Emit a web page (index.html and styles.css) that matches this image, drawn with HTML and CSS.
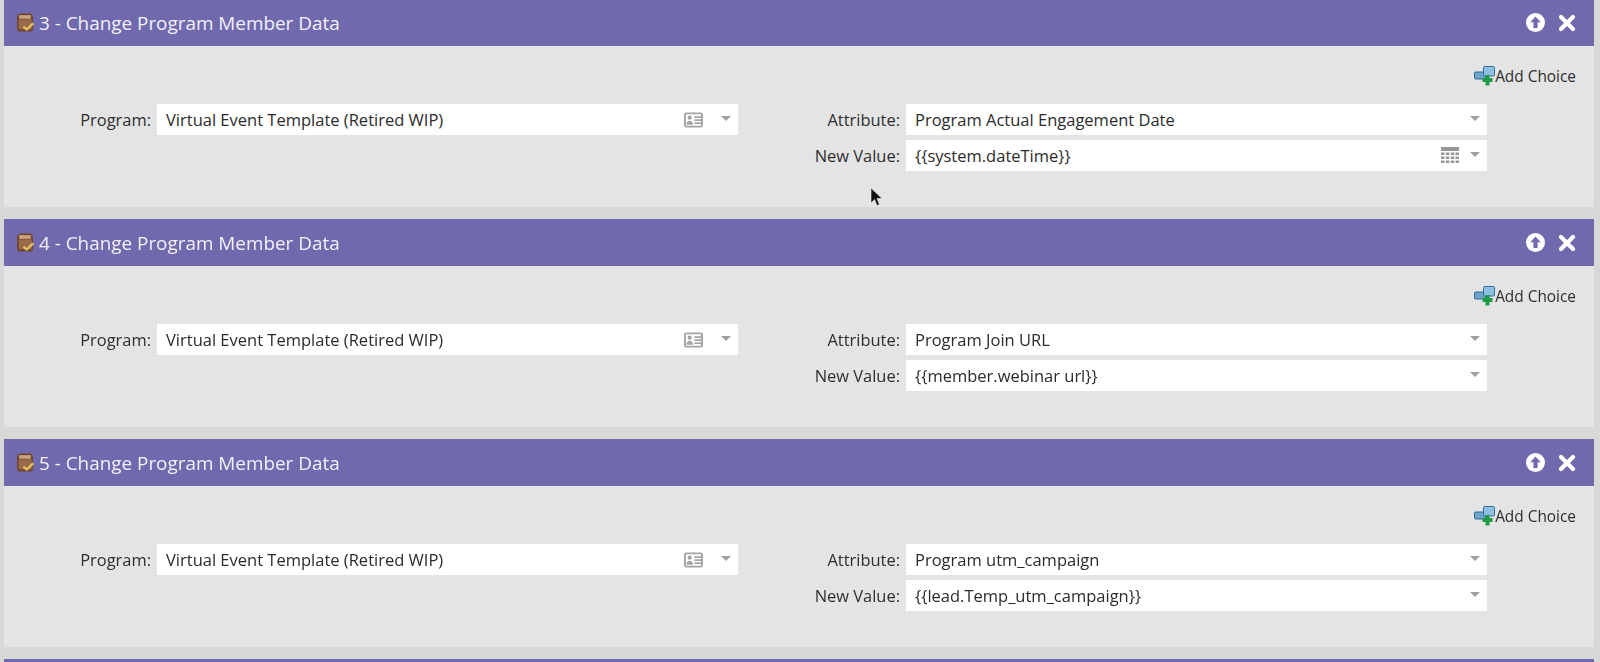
FILE: index.html
```html
<!DOCTYPE html>
<html lang="en">
<head>
<meta charset="utf-8">
<title>Flow steps</title>
<link rel="stylesheet" href="styles.css">
</head>
<body>
<svg class="defs" width="0" height="0" aria-hidden="true">
  <defs>
    <symbol id="i-box" viewBox="0 0 18 18">
      <path d="M1 3 3.500 .5h10.500l2 2.500v13l-1.500 1.500h-12L1 16z" fill="#6e452b"/>
      <path d="M3 2h11v3.500H3z" fill="#c9a27f"/>
      <path d="M2.500 6h12.500v9.500H2.500z" fill="#99694a"/>
      <path d="M8 12l2.200 2.200 5-5.200 2 1.500-7 6.500-4-3.300z" fill="#e0c25c"/>
    </symbol>
    <symbol id="i-up" viewBox="0 0 20 20">
      <circle cx="10" cy="10" r="10" fill="#fff"/>
      <path d="M10 3.800 15.500 9.800h-3.300v6H7.800v-6H4.500z" fill="#7069ad"/>
    </symbol>
    <symbol id="i-x" viewBox="0 0 18 18">
      <path d="M3 3l12 12M15 3 3 15" stroke="#fff" stroke-width="4.200" stroke-linecap="round" fill="none"/>
    </symbol>
    <symbol id="i-add" viewBox="0 0 21 20">
      <rect x="0.500" y="6" width="11" height="7" rx="1" fill="#6fa3c7" stroke="#2f6f9c"/>
      <rect x="9.500" y="0.500" width="11" height="9.500" rx="1" fill="#8fbfe0" stroke="#2f6f9c"/>
      <path d="M11.500 9h4v3h3v4h-3v3.500h-4V16h-3v-4h3z" fill="#1f9a47"/>
    </symbol>
    <symbol id="i-card" viewBox="0 0 20 16">
      <rect x="1" y="1" width="18" height="14" rx="1.500" fill="#fff" stroke="#a4a4a4" stroke-width="2"/>
      <circle cx="6" cy="5.500" r="2.200" fill="#a4a4a4"/>
      <path d="M2.500 13c0-5.500 7-5.500 7 0zM11 4h7v1.800h-7zM11 7.200h7V9h-7zM11 10.400h7v1.800h-7z" fill="#a4a4a4"/>
    </symbol>
    <symbol id="i-grid" viewBox="0 0 18 18">
      <path d="M0 0h18v4H0z" fill="#979797"/>
      <path d="M0 5.500h3.500V8H0zM4.800 5.500h3.500V8H4.800zM9.700 5.500h3.500V8H9.700zM14.500 5.500H18V8h-3.500zM0 9.500h3.500V12H0zM4.800 9.500h3.500V12H4.800zM9.700 9.500h3.500V12H9.700zM14.500 9.500H18V12h-3.500zM0 13.500h3.500V16H0zM4.800 13.500h3.500V16H4.800zM9.700 13.500h3.500V16H9.700zM14.500 13.500H18V16h-3.500z" fill="#979797"/>
    </symbol>
  </defs>
</svg>

<main class="flow">
  <section class="step">
    <header class="step-head">
      <svg class="ico-box"><use href="#i-box"/></svg>
      <h2 class="step-title">3 - Change Program Member Data</h2>
      <svg class="ico-up"><use href="#i-up"/></svg>
      <svg class="ico-x"><use href="#i-x"/></svg>
    </header>
    <div class="step-body">
      <div class="add-row"><svg class="ico-add"><use href="#i-add"/></svg><span>Add Choice</span></div>
      <div class="fields">
        <div class="col col-left">
          <div class="field">
            <label class="lbl">Program:</label>
            <div class="input"><span class="val">Virtual Event Template (Retired WIP)</span><svg class="ico-card"><use href="#i-card"/></svg><i class="caret"></i></div>
          </div>
        </div>
        <div class="col col-right">
          <div class="field">
            <label class="lbl">Attribute:</label>
            <div class="input"><span class="val">Program Actual Engagement Date</span><i class="caret"></i></div>
          </div>
          <div class="field">
            <label class="lbl">New Value:</label>
            <div class="input"><span class="val">{{system.dateTime}}</span><svg class="ico-grid"><use href="#i-grid"/></svg><i class="caret"></i></div>
          </div>
        </div>
      </div>
      <svg class="cursor" viewBox="0 0 12 20" width="12" height="20"><path d="M1 1v15l3.500-3.500 2.500 6 2.500-1-2.500-6h5z" fill="#111" stroke="#eee" stroke-width=".6"/></svg>
    </div>
  </section>

  <section class="step">
    <header class="step-head">
      <svg class="ico-box"><use href="#i-box"/></svg>
      <h2 class="step-title">4 - Change Program Member Data</h2>
      <svg class="ico-up"><use href="#i-up"/></svg>
      <svg class="ico-x"><use href="#i-x"/></svg>
    </header>
    <div class="step-body">
      <div class="add-row"><svg class="ico-add"><use href="#i-add"/></svg><span>Add Choice</span></div>
      <div class="fields">
        <div class="col col-left">
          <div class="field">
            <label class="lbl">Program:</label>
            <div class="input"><span class="val">Virtual Event Template (Retired WIP)</span><svg class="ico-card"><use href="#i-card"/></svg><i class="caret"></i></div>
          </div>
        </div>
        <div class="col col-right">
          <div class="field">
            <label class="lbl">Attribute:</label>
            <div class="input"><span class="val">Program Join URL</span><i class="caret"></i></div>
          </div>
          <div class="field">
            <label class="lbl">New Value:</label>
            <div class="input"><span class="val">{{member.webinar url}}</span><i class="caret"></i></div>
          </div>
        </div>
      </div>
    </div>
  </section>

  <section class="step">
    <header class="step-head">
      <svg class="ico-box"><use href="#i-box"/></svg>
      <h2 class="step-title">5 - Change Program Member Data</h2>
      <svg class="ico-up"><use href="#i-up"/></svg>
      <svg class="ico-x"><use href="#i-x"/></svg>
    </header>
    <div class="step-body">
      <div class="add-row"><svg class="ico-add"><use href="#i-add"/></svg><span>Add Choice</span></div>
      <div class="fields">
        <div class="col col-left">
          <div class="field">
            <label class="lbl">Program:</label>
            <div class="input"><span class="val">Virtual Event Template (Retired WIP)</span><svg class="ico-card"><use href="#i-card"/></svg><i class="caret"></i></div>
          </div>
        </div>
        <div class="col col-right">
          <div class="field">
            <label class="lbl">Attribute:</label>
            <div class="input"><span class="val">Program utm_campaign</span><i class="caret"></i></div>
          </div>
          <div class="field">
            <label class="lbl">New Value:</label>
            <div class="input"><span class="val">{{lead.Temp_utm_campaign}}</span><i class="caret"></i></div>
          </div>
        </div>
      </div>
    </div>
  </section>

  <section class="step">
    <header class="step-head step-head-peek"></header>
  </section>
</main>
</body>
</html>
```

FILE: styles.css
```css
html, body {
  margin: 0;
  height: 662px;
  overflow: hidden;
  background: #d8d8d6;
  font-family: "Open Sans", "Noto Sans", sans-serif;
  color: #333;
}
.defs { position: absolute; }
.flow {
  display: flex;
  flex-direction: column;
  gap: 12px;
  margin: -1px 6px 0 4px;
  filter: blur(0.4px);
}
.step-head {
  height: 47px;
  background: #7069ad;
  display: flex;
  align-items: center;
  padding: 0 18px 0 12px;
  box-sizing: border-box;
  flex: none;
}
.step-head-peek { height: 3px; }
.ico-box { width: 19px; height: 19px; margin-right: 4px; }
.step-title {
  margin: 0;
  flex: 1;
  font-size: 18.900px;
  font-weight: 400;
  color: #f2f1f8;
}
.ico-up { width: 19px; height: 19px; margin-right: 13px; }
.ico-x { width: 18px; height: 18px; }
.step-body {
  position: relative;
  height: 161px;
  box-sizing: border-box;
  background: #e4e4e4;
  padding: 19px 18px 0 0;
}
.add-row {
  display: flex;
  justify-content: flex-end;
  align-items: center;
  height: 22px;
  font-size: 15.400px;
  color: #2e2e2e;
}
.ico-add { width: 21px; height: 20px; }
.fields {
  display: flex;
  margin-top: 17px;
}
.col { display: flex; flex-direction: column; gap: 5px; }
.col-left { width: 734px; }
.col-right { width: 749px; }
.field { display: flex; align-items: center; justify-content: flex-end; gap: 6px; }
.lbl { font-size: 16.450px; color: #2e2e2e; }
.input {
  display: flex;
  align-items: center;
  height: 31px;
  background: #fff;
  box-sizing: border-box;
  padding: 0 7px 0 9px;
  font-size: 16.500px;
  color: #2b2b2b;
}
.col-left .input { width: 581px; }
.col-right .input { width: 581px; }
.val { flex: 1; }
.ico-card { width: 19px; height: 16px; margin-right: 18px; }
.ico-grid { width: 18px; height: 18px; margin-right: 11px; }
.caret {
  width: 0;
  height: 0;
  border-left: 5px solid transparent;
  border-right: 5px solid transparent;
  border-top: 5px solid #a0a0a0;
  margin-bottom: 3px;
}
.cursor { position: absolute; left: 866px; top: 141px; }
```
